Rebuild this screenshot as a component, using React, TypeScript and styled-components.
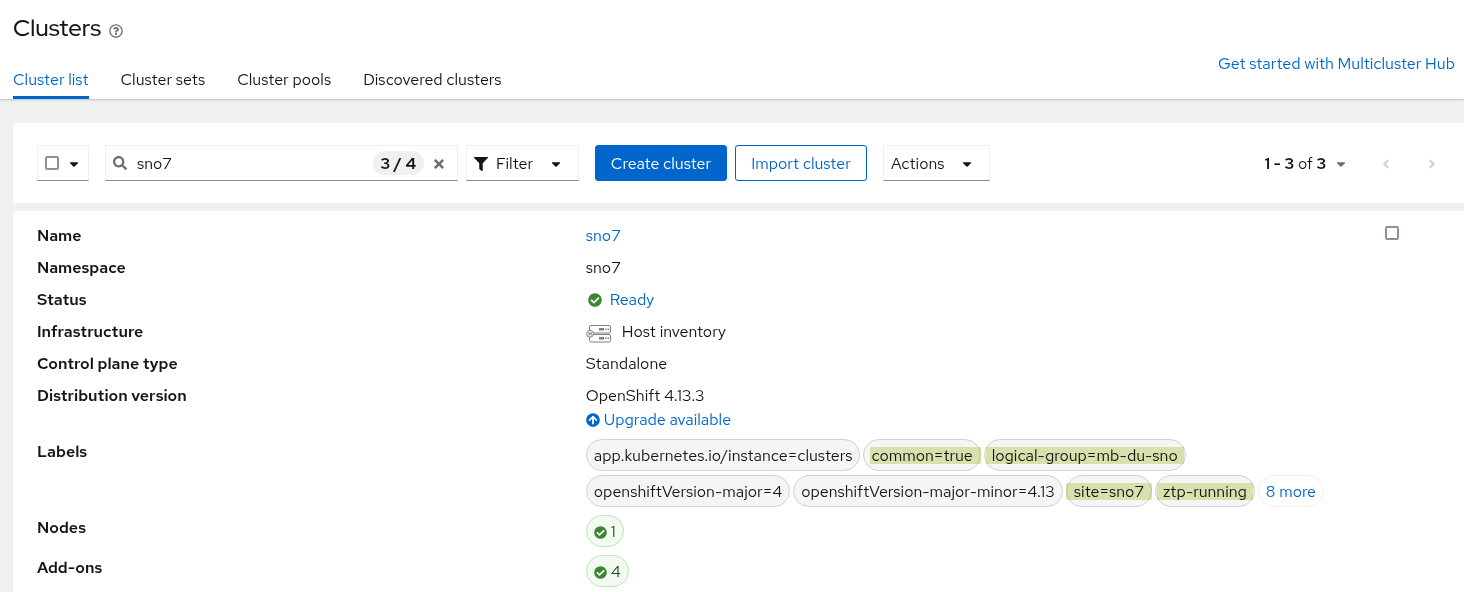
import React from 'react';
import styled, { createGlobalStyle } from 'styled-components';
import {
  FaAngleLeft,
  FaAngleRight,
  FaArrowCircleUp,
  FaCaretDown,
  FaCheckCircle,
  FaFilter,
  FaRegQuestionCircle,
  FaSearch,
  FaTimes,
} from 'react-icons/fa';

const color = {
  text: '#151515',
  muted: '#6a6e73',
  link: '#0066cc',
  success: '#3e8635',
  page: '#f0f0f0',
  line: '#f0f0f0',
  strong: '#8a8d90',
};

const GlobalStyle = createGlobalStyle`
  *, *::before, *::after { box-sizing: border-box; }
  body {
    margin: 0;
    background: ${color.page};
    color: ${color.text};
    font: 400 16px/24px 'Red Hat Text', Inter, sans-serif;
  }
  button, input { font: inherit; color: inherit; }
  h1, dl, dd { margin: 0; }
  svg { display: block; flex: none; }
`;

const Header = styled.header`
  position: relative;
  display: flex;
  justify-content: space-between;
  align-items: center;
  padding: 12px 9px 0 13px;
  background: #fff;
  box-shadow: 0 1px 2px rgba(3, 3, 3, 0.2);
`;

const TitleRow = styled.div`
  display: flex;
  align-items: center;
  gap: 8px;
`;

const Title = styled.h1`
  font-family: 'Red Hat Display', 'Red Hat Text', Inter, sans-serif;
  font-size: 24px;
  font-weight: 500;
  line-height: 31px;
`;

const HelpButton = styled.button`
  padding: 6px 0 0;
  border: 0;
  background: none;
  color: ${color.muted};
  font-size: 14px;
`;

const Tabs = styled.nav`
  display: flex;
  gap: 32px;
  margin-top: 16px;
`;

const Tab = styled.a<{ $current?: boolean }>`
  padding: 9px 0 4px;
  border-bottom: 3px solid ${p => (p.$current ? color.link : 'transparent')};
  color: ${p => (p.$current ? color.link : color.text)};
  text-decoration: none;
`;

const Link = styled.a`
  color: ${color.link};
  text-decoration: none;
`;

const HeaderLink = styled(Link)`
  margin-top: 16px;
`;

const Main = styled.main`
  display: flex;
  flex-direction: column;
  gap: 8px;
  padding: 24px 0 0 13px;
`;

const Toolbar = styled.div`
  display: flex;
  align-items: center;
  padding: 22px 21px 22px 24px;
  background: #fff;
`;

const ToolbarGroup = styled.div`
  display: flex;
  gap: 8px;
  margin-right: 16px;
`;

const Field = styled.div`
  display: flex;
  align-items: center;
  gap: 8px;
  height: 36px;
  padding: 0 7px;
  border: 1px solid ${color.line};
  border-bottom-color: ${color.strong};
  background: #fff;
`;

const SearchField = styled(Field)`
  gap: 4px;
  width: 353px;
  color: ${color.muted};
`;

const SearchInput = styled.input`
  flex: 1;
  min-width: 0;
  padding: 2px 0 0 6px;
  border: 0;
  outline: 0;
  background: none;
  color: ${color.text};
`;

const Count = styled.span`
  padding: 2px 8px 0;
  border-radius: 24px;
  background: ${color.line};
  color: ${color.text};
  font-weight: 600;
  line-height: 22px;
`;

const IconButton = styled.button<{ $flush?: boolean }>`
  display: flex;
  padding: 2px ${p => (p.$flush ? 0 : 4)}px 0;
  border: 0;
  background: none;
  color: inherit;
`;

const Toggle = styled.button<{ $width: number }>`
  display: flex;
  align-items: center;
  gap: 8px;
  width: ${p => p.$width}px;
  height: 36px;
  padding: 2px 15px 0 7px;
  border: 1px solid ${color.line};
  border-bottom-color: ${color.strong};
  background: #fff;

  svg:last-child { margin-left: auto; }
`;

const Button = styled.button<{ $primary?: boolean }>`
  width: 132px;
  height: 36px;
  padding: 2px 0 0;
  border: 1px solid ${color.link};
  border-radius: 3px;
  background: ${p => (p.$primary ? color.link : '#fff')};
  color: ${p => (p.$primary ? '#fff' : color.link)};
  white-space: nowrap;
`;

const Checkbox = styled.input`
  appearance: none;
  width: 14px;
  height: 14px;
  margin: 0;
  border: 2px solid #8f8f9d;
  border-radius: 2px;
  background: #fff;
`;

const Pagination = styled.div`
  display: flex;
  align-items: center;
  gap: 24px;
  margin-left: auto;
  color: #d2d2d2;
`;

const Range = styled.button`
  display: flex;
  align-items: center;
  gap: 8px;
  padding: 2px 3px 0 0;
  border: 0;
  background: none;
  color: ${color.text};

  b { font-weight: 600; }
  svg { color: ${color.muted}; }
`;

const Card = styled.section`
  display: grid;
  grid-template-columns: 1fr 55px;
  padding: 12px 24px;
  background: #fff;
`;

const SelectCell = styled.div`
  padding-top: 3px;
  line-height: 0;
`;

const Details = styled.dl`
  display: flex;
  flex-direction: column;
  gap: 7px;
`;

const Row = styled.div`
  display: grid;
  grid-template-columns: 1fr minmax(0, 1.5fr);
  column-gap: 16px;
  padding-top: 1px;

  dt { font-weight: 600; }
`;

const IconText = styled.div<{ $gap: number; $inset?: number }>`
  display: flex;
  align-items: center;
  gap: ${p => p.$gap}px;
  padding-left: ${p => p.$inset ?? 0}px;
`;

const Pills = styled.div`
  display: flex;
  flex-wrap: wrap;
  gap: 4px 3px;
  margin: -1px 0 1px;
`;

const tones = {
  grey: { bg: '#f5f5f5', border: '#d2d2d2', text: color.text },
  plain: { bg: '#fff', border: '#f0f0f0', text: color.link },
  green: { bg: '#f3faf2', border: '#bde5b8', text: '#1e4f18' },
};

const Pill = styled.span<{ $tone: keyof typeof tones }>`
  position: relative;
  display: inline-flex;
  align-items: center;
  gap: 4px;
  height: 32px;
  padding: 2px 7px 0;
  border: 1px solid ${p => tones[p.$tone].border};
  border-radius: 30px;
  background: ${p => tones[p.$tone].bg};
  color: ${p => tones[p.$tone].text};
  white-space: nowrap;
`;

const MorePill = styled(Pill).attrs({ as: 'button', $tone: 'plain' })``;

/* Felt-tip stroke drawn over a label */
const Marker = styled.span<{ $left: number; $right: number }>`
  position: absolute;
  top: 7px;
  left: ${p => p.$left}px;
  right: ${p => p.$right}px;
  height: 17px;
  background: #e3eab4;
  mix-blend-mode: multiply;
`;

const Success = styled(FaCheckCircle)`
  color: ${color.success};
`;

const HostIcon = () => (
  <svg width="26" height="24" viewBox="0 0 26 24" fill="none" stroke="#7d8084" aria-hidden="true">
    <rect x="3.5" y="5.5" width="21" height="7.5" rx="1.5" />
    <rect x="3.5" y="14.5" width="21" height="7.5" rx="1.5" />
    <path d="M13 9.2h5M13 18.2h5" strokeWidth="2.4" />
    <path d="M19 9.2h4.5M19 18.2h4.5" strokeWidth="1.6" strokeDasharray="1.5 1" />
    <circle cx="4" cy="13.8" r="3.4" fill="#fff" />
    <path d="M3 12v3.6M5.2 12v3.6M3 13.8h2" />
  </svg>
);

interface Label {
  text: string;
  mark?: [number, number];
}

const labels: Label[] = [
  { text: 'app.kubernetes.io/instance=clusters' },
  { text: 'common=true', mark: [6, -1] },
  { text: 'logical-group=mb-du-sno', mark: [1, 1] },
  { text: 'openshiftVersion-major=4' },
  { text: 'openshiftVersion-major-minor=4.13' },
  { text: 'site=sno7', mark: [-1, -1] },
  { text: 'ztp-running', mark: [1, 1] },
];

const tabs = ['Cluster list', 'Cluster sets', 'Cluster pools', 'Discovered clusters'];

export default function App() {
  return (
    <>
      <GlobalStyle />
      <Header>
        <div>
          <TitleRow>
            <Title>Clusters</Title>
            <HelpButton aria-label="More information about clusters"><FaRegQuestionCircle /></HelpButton>
          </TitleRow>
          <Tabs>
            {tabs.map((tab, i) => (
              <Tab key={tab} href="#" $current={i === 0} aria-current={i === 0 ? 'page' : undefined}>{tab}</Tab>
            ))}
          </Tabs>
        </div>
        <HeaderLink href="#">Get started with Multicluster Hub</HeaderLink>
      </Header>
      <Main>
        <Toolbar>
          <ToolbarGroup>
            <Field>
              <Checkbox type="checkbox" aria-label="Select all clusters" />
              <IconButton $flush aria-label="Selection options"><FaCaretDown size={14} color={color.text} /></IconButton>
            </Field>
          </ToolbarGroup>
          <ToolbarGroup>
            <SearchField>
              <FaSearch size={14} />
              <SearchInput type="text" aria-label="Search clusters" defaultValue="sno7" />
              <Count>3 / 4</Count>
              <IconButton aria-label="Clear search"><FaTimes size={14} /></IconButton>
            </SearchField>
            <Toggle $width={113}><FaFilter size={14} />Filter<FaCaretDown size={14} /></Toggle>
          </ToolbarGroup>
          <ToolbarGroup>
            <Button $primary>Create cluster</Button>
            <Button>Import cluster</Button>
          </ToolbarGroup>
          <Toggle $width={107}>Actions<FaCaretDown size={14} /></Toggle>
          <Pagination>
            <Range><span><b>1 - 3</b> of <b>3</b></span><FaCaretDown size={14} /></Range>
            <IconButton aria-label="Previous page" disabled><FaAngleLeft size={14} /></IconButton>
            <IconButton aria-label="Next page" disabled><FaAngleRight size={14} /></IconButton>
          </Pagination>
        </Toolbar>
        <Card>
          <Details>
            <Row><dt>Name</dt><dd><Link href="#">sno7</Link></dd></Row>
            <Row><dt>Namespace</dt><dd>sno7</dd></Row>
            <Row>
              <dt>Status</dt>
              <dd><IconText $gap={8} $inset={2}><Success size={14} /><Link href="#">Ready</Link></IconText></dd>
            </Row>
            <Row>
              <dt>Infrastructure</dt>
              <dd><IconText $gap={10}><HostIcon />Host inventory</IconText></dd>
            </Row>
            <Row><dt>Control plane type</dt><dd>Standalone</dd></Row>
            <Row>
              <dt>Distribution version</dt>
              <dd>
                OpenShift 4.13.3
                <IconText $gap={4}><FaArrowCircleUp size={14} color={color.link} /><Link href="#">Upgrade available</Link></IconText>
              </dd>
            </Row>
            <Row>
              <dt>Labels</dt>
              <dd>
                <Pills>
                  {labels.map(({ text, mark }) => (
                    <Pill key={text} $tone="grey">
                      {text}
                      {mark && <Marker $left={mark[0]} $right={mark[1]} />}
                    </Pill>
                  ))}
                  <MorePill>8 more</MorePill>
                </Pills>
              </dd>
            </Row>
            <Row><dt>Nodes</dt><dd><Pills><Pill $tone="green"><Success size={13} />1</Pill></Pills></dd></Row>
            <Row><dt>Add-ons</dt><dd><Pills><Pill $tone="green"><Success size={13} />4</Pill></Pills></dd></Row>
          </Details>
          <SelectCell><Checkbox type="checkbox" aria-label="Select sno7" /></SelectCell>
        </Card>
      </Main>
    </>
  );
}
